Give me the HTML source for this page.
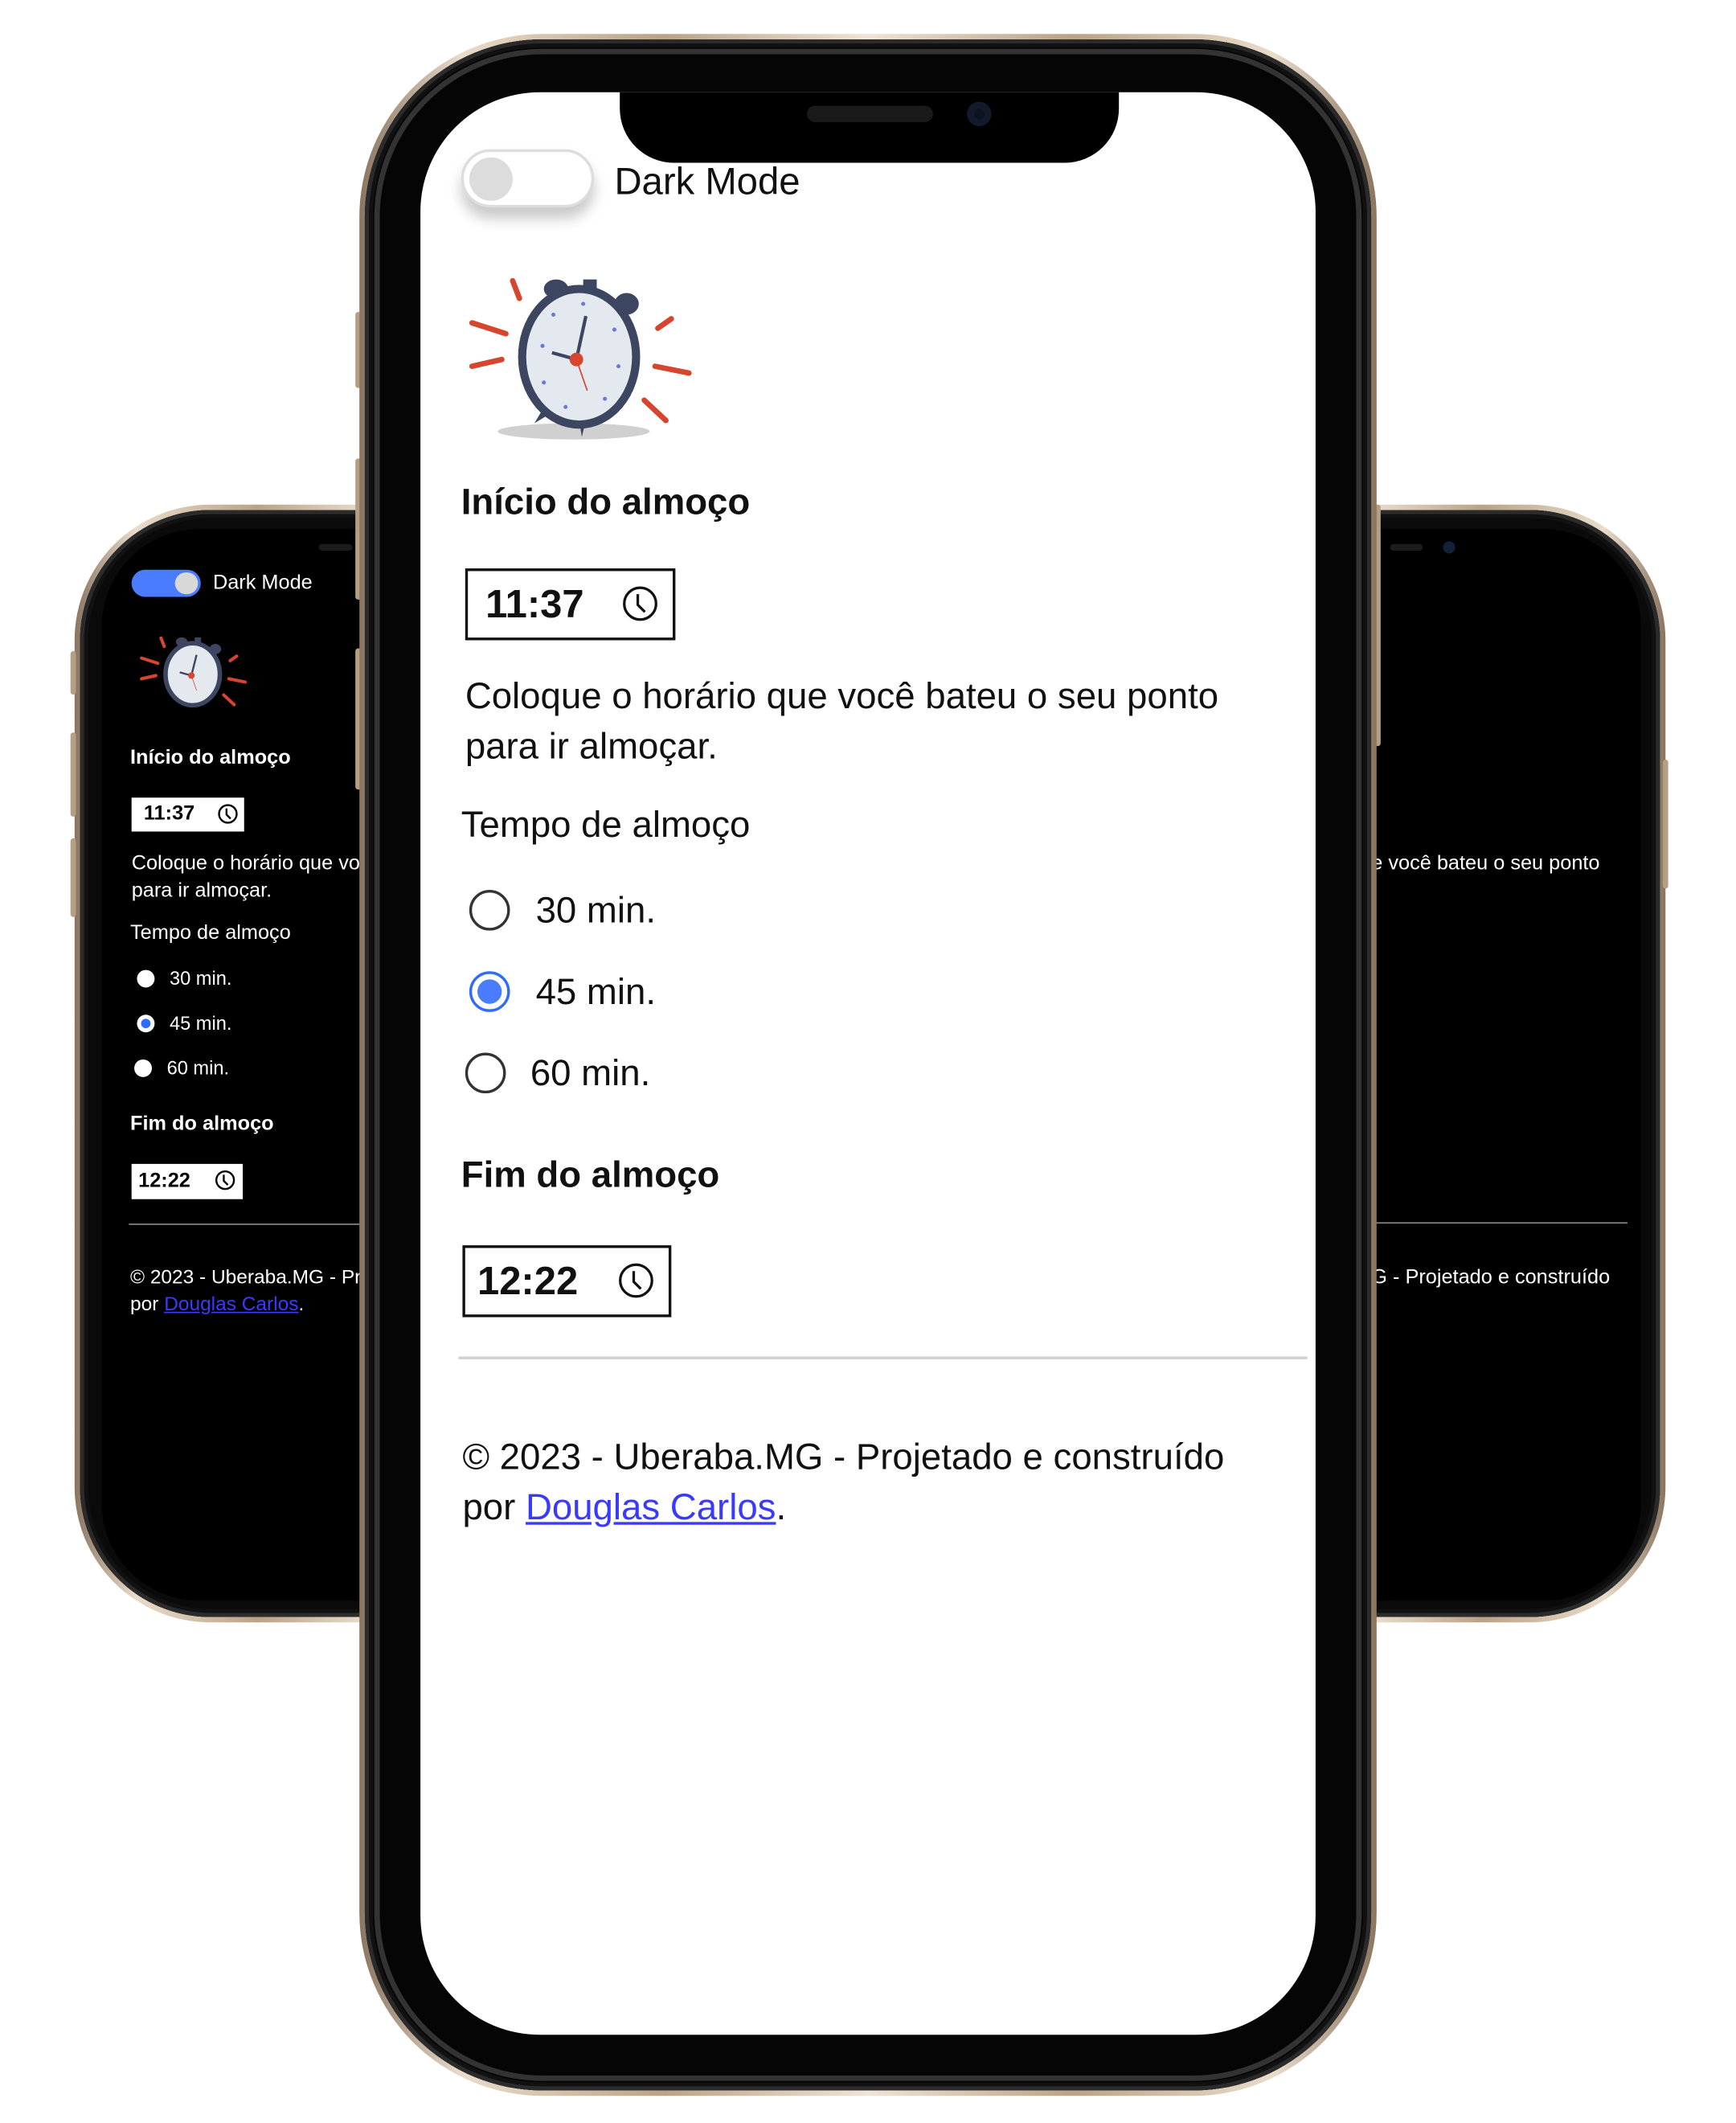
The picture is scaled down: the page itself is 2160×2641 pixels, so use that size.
<!DOCTYPE html>
<html><head><meta charset="utf-8">
<style>
*{margin:0;padding:0;box-sizing:border-box}
html,body{width:2160px;height:2640px;background:#fff;overflow:hidden}
#w{position:absolute;left:0;top:0;width:1280px;height:1565px;transform:scale(1.6875);transform-origin:0 0;font-family:"Liberation Sans","DejaVu Sans",sans-serif}
.abs{position:absolute}
.gold{background:linear-gradient(90deg,#8a7560,#e9dccb 10%,#b9a387 30%,#efe4d6 50%,#b9a387 70%,#e9dccb 90%,#8a7560)}
.bez{background:#0a0a0a;box-shadow:inset 0 0 0 3px #2b2b2b,inset 0 0 0 6px #111}
.t{position:absolute;white-space:nowrap}
.btn{position:absolute;background:#b49e84;border-radius:2px}
</style></head><body><div id="w">

<!-- LEFT PHONE -->
<div class="abs gold" style="left:55px;top:372px;width:450px;height:824px;border-radius:100px"></div>
<div class="abs bez" style="left:59px;top:376px;width:442px;height:816px;border-radius:96px"></div>
<div class="abs" style="left:75px;top:390px;width:410px;height:790px;border-radius:72px;background:#000;overflow:hidden">
  <div class="abs" style="left:160px;top:11px;width:25px;height:5px;border-radius:3px;background:#1c1c1c"></div>
  <div class="abs" style="left:22px;top:30px;width:51px;height:20px;border-radius:10px;background:#4a7cff"></div>
  <div class="abs" style="left:54px;top:32px;width:17px;height:16px;border-radius:8px;background:#d8d8d8"></div>
  <div class="t" style="left:82px;top:31px;font-size:15px;color:#fff">Dark Mode</div>
  <svg class="abs" style="left:22px;top:77px" width="93" height="62" viewBox="0 0 170 130"><g stroke="#d6452e" stroke-width="5" stroke-linecap="round"><line x1="33" y1="7" x2="38" y2="20"/><line x1="3" y1="38" x2="28" y2="46"/><line x1="3" y1="70" x2="25" y2="65"/><line x1="140" y1="42" x2="150" y2="35"/><line x1="138" y1="70" x2="163" y2="75"/><line x1="130" y1="95" x2="146" y2="110"/></g><g fill="#3d4660"><ellipse cx="65" cy="13" rx="9" ry="7"/><ellipse cx="117" cy="24" rx="9" ry="8"/><rect x="85" y="6" width="10" height="10"/></g><ellipse cx="82" cy="63" rx="42" ry="48" fill="#e3e9ee" stroke="#3d4660" stroke-width="7"/><line x1="80" y1="65" x2="88" y2="33" stroke="#3d4660" stroke-width="3"/><line x1="80" y1="65" x2="62" y2="60" stroke="#3d4660" stroke-width="3"/><line x1="80" y1="65" x2="88" y2="88" stroke="#d6452e" stroke-width="1"/><circle cx="80" cy="65" r="5" fill="#d6452e"/></svg>
  <div class="t" style="left:21px;top:160px;font-size:15px;font-weight:bold;color:#fff">Início do almoço</div>
  <div class="abs" style="left:22px;top:198px;width:83px;height:25px;background:#fff"></div>
  <div class="t" style="left:31px;top:201px;font-size:15px;font-weight:bold;color:#000">11:37</div>
  <svg class="abs" style="left:85px;top:202px" width="16" height="16" viewBox="0 0 16 16"><circle cx="8" cy="8" r="6.5" fill="none" stroke="#000" stroke-width="1.4"/><path d="M7 4v4.5l3 3" fill="none" stroke="#000" stroke-width="1.4"/></svg>
  <div class="t" style="left:22px;top:237px;font-size:15px;color:#fff;line-height:20px">Coloque o horário que você bateu o seu ponto<br>para ir almoçar.</div>
  <div class="t" style="left:21px;top:289px;font-size:15px;color:#fff">Tempo de almoço</div>
  <div class="abs" style="left:26px;top:325px;width:13px;height:13px;border-radius:50%;background:#fff"></div>
  <div class="t" style="left:50px;top:323px;font-size:14px;color:#fff">30 min.</div>
  <div class="abs" style="left:26px;top:358px;width:13px;height:13px;border-radius:50%;background:#fff"></div>
  <div class="abs" style="left:29px;top:361px;width:7px;height:7px;border-radius:50%;background:#2f6bff"></div>
  <div class="t" style="left:50px;top:356px;font-size:14px;color:#fff">45 min.</div>
  <div class="abs" style="left:24px;top:391px;width:13px;height:13px;border-radius:50%;background:#fff"></div>
  <div class="t" style="left:48px;top:389px;font-size:14px;color:#fff">60 min.</div>
  <div class="t" style="left:21px;top:430px;font-size:15px;font-weight:bold;color:#fff">Fim do almoço</div>
  <div class="abs" style="left:22px;top:468px;width:82px;height:26px;background:#fff"></div>
  <div class="t" style="left:27px;top:472px;font-size:15px;font-weight:bold;color:#000">12:22</div>
  <svg class="abs" style="left:83px;top:472px" width="16" height="16" viewBox="0 0 16 16"><circle cx="8" cy="8" r="6.5" fill="none" stroke="#000" stroke-width="1.4"/><path d="M7 4v4.5l3 3" fill="none" stroke="#000" stroke-width="1.4"/></svg>
  <div class="abs" style="left:20px;top:512px;width:380px;height:1px;background:#888"></div>
  <div class="t" style="left:21px;top:542px;font-size:14.5px;color:#fff;line-height:20px">© 2023 - Uberaba.MG - Projetado e construído<br>por <span style="color:#3a3aff;text-decoration:underline">Douglas Carlos</span>.</div>
</div>
<div class="btn" style="left:52px;top:480px;width:4px;height:32px"></div>
<div class="btn" style="left:52px;top:540px;width:4px;height:62px"></div>
<div class="btn" style="left:52px;top:618px;width:4px;height:58px"></div>

<!-- RIGHT PHONE -->
<div class="abs gold" style="left:778px;top:372px;width:450px;height:824px;border-radius:100px"></div>
<div class="abs bez" style="left:782px;top:376px;width:442px;height:816px;border-radius:96px"></div>
<div class="abs" style="left:800px;top:390px;width:410px;height:790px;border-radius:72px;background:#000;overflow:hidden">
  <div class="abs" style="left:225px;top:11px;width:24px;height:5px;border-radius:3px;background:#1c1c1c"></div>
  <div class="abs" style="left:264px;top:9px;width:9px;height:9px;border-radius:50%;background:#12203a"></div>
  <div class="t" style="left:71px;top:237px;font-size:15px;color:#fff;line-height:20px">Coloque o horário que você bateu o seu ponto<br>para ir almoçar.</div>
  <div class="abs" style="left:0;top:511px;width:400px;height:1px;background:#888"></div>
  <div class="t" style="left:75px;top:542px;font-size:15px;color:#fff;line-height:20px">© 2023 - Uberaba.MG - Projetado e construído</div>
</div>
<div class="btn" style="left:1226px;top:560px;width:4px;height:95px"></div>

<!-- MAIN PHONE -->
<div class="abs" style="left:262px;top:230px;width:6px;height:56px;background:#b49e84;border-radius:2px"></div>
<div class="abs" style="left:262px;top:338px;width:6px;height:104px;background:#b49e84;border-radius:2px"></div>
<div class="abs" style="left:262px;top:478px;width:6px;height:104px;background:#b49e84;border-radius:2px"></div>
<div class="abs" style="left:1012px;top:372px;width:6px;height:178px;background:#b49e84;border-radius:2px"></div>
<div class="abs gold" style="left:265px;top:25px;width:750px;height:1520px;border-radius:135px"></div>
<div class="abs bez" style="left:269px;top:29px;width:742px;height:1512px;border-radius:131px;background:#050505"></div>
<div class="abs" style="left:276px;top:36px;width:728px;height:1498px;border-radius:124px;border:4px solid #333"></div>
<div class="abs" style="left:310px;top:68px;width:660px;height:1432px;border-radius:88px;background:#fff;overflow:hidden">
  <div class="abs" style="left:147px;top:-10px;width:368px;height:62px;background:#000;border-radius:0 0 40px 40px"></div>
  <div class="abs" style="left:285px;top:10px;width:93px;height:12px;border-radius:6px;background:#1a1a1a"></div>
  <div class="abs" style="left:403px;top:7px;width:18px;height:18px;border-radius:50%;background:#0c1424;box-shadow:inset 0 0 0 5px #121a2c"></div>
  <div class="abs" style="left:30px;top:42px;width:98px;height:43px;border-radius:22px;background:#fff;border:2px solid #ddd;box-shadow:0 8px 10px rgba(0,0,0,.22)"></div>
  <div class="abs" style="left:36px;top:48px;width:32px;height:32px;border-radius:50%;background:#dcdcdc"></div>
  <div class="t" style="left:143px;top:50px;font-size:28px;color:#111">Dark Mode</div>
  <svg class="abs" style="left:35px;top:132px" width="170" height="130" viewBox="0 0 170 130"><ellipse cx="78" cy="118" rx="56" ry="6" fill="#d0d0d0"/><g stroke="#d6452e" stroke-width="4" stroke-linecap="round"><line x1="33" y1="7" x2="38" y2="20"/><line x1="3" y1="38" x2="28" y2="46"/><line x1="3" y1="70" x2="25" y2="65"/><line x1="140" y1="42" x2="150" y2="35"/><line x1="138" y1="70" x2="163" y2="75"/><line x1="130" y1="95" x2="146" y2="110"/></g><g fill="#3d4660"><ellipse cx="65" cy="13" rx="9" ry="7"/><ellipse cx="117" cy="24" rx="9" ry="8"/><rect x="85" y="6" width="10" height="10"/><line x1="67" y1="18" x2="72" y2="24" stroke="#3d4660" stroke-width="3"/><line x1="112" y1="28" x2="108" y2="33" stroke="#3d4660" stroke-width="3"/><path d="M55 102l-6 10 10-6zM82 110l2 12 3-12z"/></g><ellipse cx="82" cy="63" rx="42" ry="50" fill="#e3e9ee" stroke="#3d4660" stroke-width="6"/><g fill="#6a78d8"><circle cx="85" cy="24" r="1.5"/><circle cx="108" cy="43" r="1.5"/><circle cx="111" cy="70" r="1.5"/><circle cx="101" cy="94" r="1.5"/><circle cx="72" cy="100" r="1.5"/><circle cx="56" cy="82" r="1.5"/><circle cx="55" cy="55" r="1.5"/><circle cx="63" cy="32" r="1.5"/></g><line x1="80" y1="65" x2="87" y2="33" stroke="#3d4660" stroke-width="2.5"/><line x1="80" y1="65" x2="62" y2="60" stroke="#3d4660" stroke-width="2.5"/><line x1="80" y1="65" x2="88" y2="88" stroke="#d6452e" stroke-width="1"/><circle cx="80" cy="65" r="5" fill="#d6452e"/></svg>
  <div class="t" style="left:30px;top:287px;font-size:27px;font-weight:bold;color:#111">Início do almoço</div>
  <div class="abs" style="left:33px;top:351px;width:155px;height:53px;border:2px solid #111"></div>
  <div class="t" style="left:48px;top:362px;font-size:29px;font-weight:bold;color:#111">11:37</div>
  <svg class="abs" style="left:148px;top:363px" width="28" height="28" viewBox="0 0 16 16"><circle cx="8" cy="8" r="6.7" fill="none" stroke="#111" stroke-width="1.1"/><path d="M7 4v4.5l3 3" fill="none" stroke="#111" stroke-width="1.1"/></svg>
  <div class="t" style="left:33px;top:427px;font-size:27px;color:#111;line-height:37px">Coloque o horário que você bateu o seu ponto<br>para ir almoçar.</div>
  <div class="t" style="left:30px;top:525px;font-size:27px;color:#111">Tempo de almoço</div>
  <div class="abs" style="left:36px;top:588px;width:30px;height:30px;border-radius:50%;border:2px solid #333"></div>
  <div class="t" style="left:85px;top:588px;font-size:27px;color:#111">30 min.</div>
  <div class="abs" style="left:36px;top:648px;width:30px;height:30px;border-radius:50%;border:2px solid #2f6bff;background:#fff"></div>
  <div class="abs" style="left:42px;top:654px;width:18px;height:18px;border-radius:50%;background:#4a7cff"></div>
  <div class="t" style="left:85px;top:648px;font-size:27px;color:#111">45 min.</div>
  <div class="abs" style="left:33px;top:708px;width:30px;height:30px;border-radius:50%;border:2px solid #333"></div>
  <div class="t" style="left:81px;top:708px;font-size:27px;color:#111">60 min.</div>
  <div class="t" style="left:30px;top:783px;font-size:27px;font-weight:bold;color:#111">Fim do almoço</div>
  <div class="abs" style="left:31px;top:850px;width:154px;height:53px;border:2px solid #111"></div>
  <div class="t" style="left:42px;top:861px;font-size:29px;font-weight:bold;color:#111">12:22</div>
  <svg class="abs" style="left:145px;top:862px" width="28" height="28" viewBox="0 0 16 16"><circle cx="8" cy="8" r="6.7" fill="none" stroke="#111" stroke-width="1.1"/><path d="M7 4v4.5l3 3" fill="none" stroke="#111" stroke-width="1.1"/></svg>
  <div class="abs" style="left:28px;top:932px;width:626px;height:2px;background:#d0d0d0"></div>
  <div class="t" style="left:31px;top:988px;font-size:27px;color:#111;line-height:37px">© 2023 - Uberaba.MG - Projetado e construído<br>por <span style="color:#3a3aff;text-decoration:underline">Douglas Carlos</span>.</div>
</div>

</div></body></html>
